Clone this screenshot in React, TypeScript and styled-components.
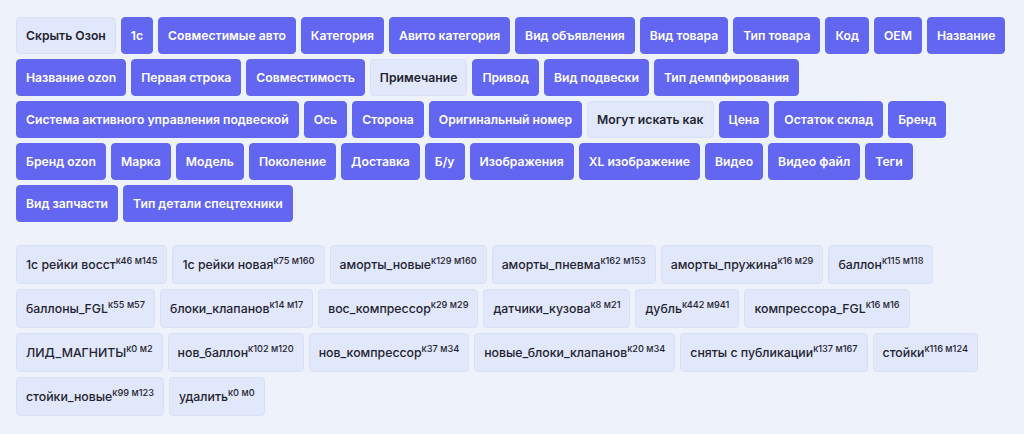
import styled, { createGlobalStyle } from "styled-components";

// Field toggles shown at the top.
const FIELDS: { label: string; active: boolean }[] = [
  { label: "Скрыть Озон", active: false },
  { label: "1с", active: true },
  { label: "Совместимые авто", active: true },
  { label: "Категория", active: true },
  { label: "Авито категория", active: true },
  { label: "Вид объявления", active: true },
  { label: "Вид товара", active: true },
  { label: "Тип товара", active: true },
  { label: "Код", active: true },
  { label: "OEM", active: true },
  { label: "Название", active: true },
  { label: "Название ozon", active: true },
  { label: "Первая строка", active: true },
  { label: "Совместимость", active: true },
  { label: "Примечание", active: false },
  { label: "Привод", active: true },
  { label: "Вид подвески", active: true },
  { label: "Тип демпфирования", active: true },
  { label: "Система активного управления подвеской", active: true },
  { label: "Ось", active: true },
  { label: "Сторона", active: true },
  { label: "Оригинальный номер", active: true },
  { label: "Могут искать как", active: false },
  { label: "Цена", active: true },
  { label: "Остаток склад", active: true },
  { label: "Бренд", active: true },
  { label: "Бренд ozon", active: true },
  { label: "Марка", active: true },
  { label: "Модель", active: true },
  { label: "Поколение", active: true },
  { label: "Доставка", active: true },
  { label: "Б/у", active: true },
  { label: "Изображения", active: true },
  { label: "XL изображение", active: true },
  { label: "Видео", active: true },
  { label: "Видео файл", active: true },
  { label: "Теги", active: true },
  { label: "Вид запчасти", active: true },
  { label: "Тип детали спецтехники", active: true },
];

// Tags with their counters.
const TAGS: { name: string; k: number; m: number }[] = [
  { name: "1с рейки восст", k: 46, m: 145 },
  { name: "1с рейки новая", k: 75, m: 160 },
  { name: "аморты_новые", k: 129, m: 160 },
  { name: "аморты_пневма", k: 162, m: 153 },
  { name: "аморты_пружина", k: 16, m: 29 },
  { name: "баллон", k: 115, m: 118 },
  { name: "баллоны_FGL", k: 55, m: 57 },
  { name: "блоки_клапанов", k: 14, m: 17 },
  { name: "вос_компрессор", k: 29, m: 29 },
  { name: "датчики_кузова", k: 8, m: 21 },
  { name: "дубль", k: 442, m: 941 },
  { name: "компрессора_FGL", k: 16, m: 16 },
  { name: "ЛИД_МАГНИТЫ", k: 0, m: 2 },
  { name: "нов_баллон", k: 102, m: 120 },
  { name: "нов_компрессор", k: 37, m: 34 },
  { name: "новые_блоки_клапанов", k: 20, m: 34 },
  { name: "сняты с публикации", k: 137, m: 167 },
  { name: "стойки", k: 116, m: 124 },
  { name: "стойки_новые", k: 99, m: 123 },
  { name: "удалить", k: 0, m: 0 },
];

const App = () => {
  return (
    <>
      <GlobalStyle />
      <Page>
        <ButtonGroup>
          {FIELDS.map((field) => (
            <FieldButton key={field.label} $active={field.active}>
              {field.label}
            </FieldButton>
          ))}
        </ButtonGroup>
        <TagGroup>
          {TAGS.map((tag) => (
            <Tag key={tag.name}>
              {tag.name}
              <Counts>{`к${tag.k} м${tag.m}`}</Counts>
            </Tag>
          ))}
        </TagGroup>
      </Page>
    </>
  );
};

// Styled components.
const GlobalStyle = createGlobalStyle`
  body {
    background: #eef2fb;
    margin: 0;
    font-family: Inter, "Noto Sans", sans-serif;
  }
`;

const Page = styled.div`
  display: flex;
  flex-direction: column;
  gap: 23px;
  padding: 17px 16px;
`;

const ButtonGroup = styled.div`
  display: flex;
  flex-wrap: wrap;
  gap: 5px;
`;

const FieldButton = styled.button<{ $active: boolean }>`
  align-items: center;
  background: ${(props) => (props.$active ? "#6366f1" : "#e2e8fb")};
  border: 1px solid ${(props) => (props.$active ? "#6366f1" : "#d9e0f5")};
  border-radius: 4px;
  color: ${(props) => (props.$active ? "#ffffff" : "#1f2430")};
  cursor: pointer;
  display: flex;
  font-family: Inter, sans-serif;
  font-size: 12.2px;
  font-weight: 600;
  height: 37px;
  padding: 0 9px;
`;

const TagGroup = styled.div`
  display: flex;
  flex-wrap: wrap;
  gap: 5px;
`;

const Tag = styled.div`
  align-items: center;
  background: #e2e8fb;
  border: 1px solid #d9e0f5;
  border-radius: 4px;
  color: #1f2430;
  display: flex;
  font-size: 12.3px;
  font-weight: 500;
  height: 37px;
  padding: 0 9px;
`;

const Counts = styled.sup`
  align-self: flex-start;
  font-size: 9.2px;
  margin-top: 9px;
`;

export default App;
